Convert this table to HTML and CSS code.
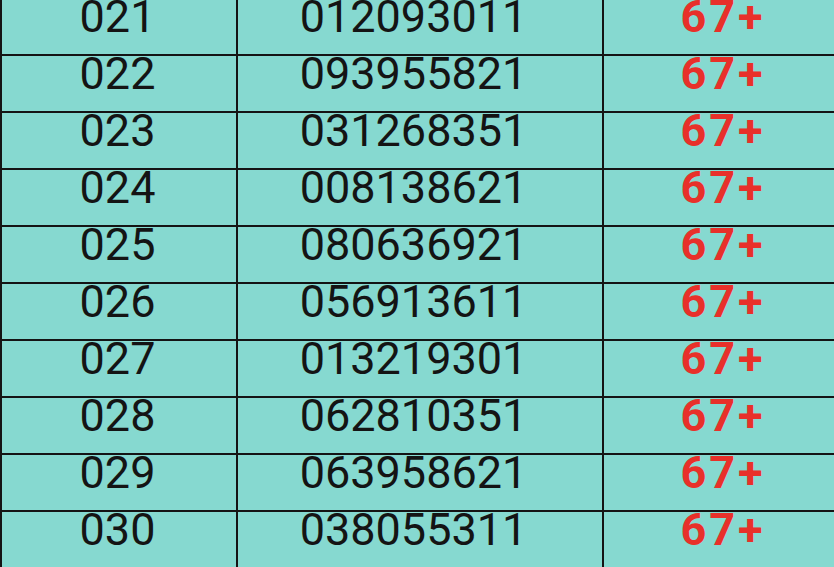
FILE: index.html
```html
<!DOCTYPE html>
<html>
<head>
<meta charset="utf-8">
<link rel="stylesheet" href="styles.css">
</head>
<body>
<div class="table">
  <div class="row"><div class="cell c1">021</div><div class="cell c2">012093011</div><div class="cell c3">67+</div></div>
  <div class="row"><div class="cell c1">022</div><div class="cell c2">093955821</div><div class="cell c3">67+</div></div>
  <div class="row"><div class="cell c1">023</div><div class="cell c2">031268351</div><div class="cell c3">67+</div></div>
  <div class="row"><div class="cell c1">024</div><div class="cell c2">008138621</div><div class="cell c3">67+</div></div>
  <div class="row"><div class="cell c1">025</div><div class="cell c2">080636921</div><div class="cell c3">67+</div></div>
  <div class="row"><div class="cell c1">026</div><div class="cell c2">056913611</div><div class="cell c3">67+</div></div>
  <div class="row"><div class="cell c1">027</div><div class="cell c2">013219301</div><div class="cell c3">67+</div></div>
  <div class="row"><div class="cell c1">028</div><div class="cell c2">062810351</div><div class="cell c3">67+</div></div>
  <div class="row"><div class="cell c1">029</div><div class="cell c2">063958621</div><div class="cell c3">67+</div></div>
  <div class="row"><div class="cell c1">030</div><div class="cell c2">038055311</div><div class="cell c3">67+</div></div>
</div>
</body>
</html>
```
FILE: styles.css
```css
html, body {
  margin: 0;
  padding: 0;
  height: 100%;
  overflow: hidden;
  background: #86d9d0;
}
.table {
  margin-top: -1.4px;
  border-left: 2px solid #141414;
  display: flex;
  flex-direction: column;
}
.row {
  display: grid;
  grid-template-columns: 236px 366px 1fr;
  height: 57.06px;
  box-sizing: border-box;
  border-bottom: 2px solid #141414;
}
.cell {
  box-sizing: border-box;
  text-align: center;
  font-family: Roboto, "Liberation Sans", sans-serif;
  font-size: 45px;
  line-height: 36px;
  color: #141414;
  white-space: nowrap;
}
.c1, .c2 {
  border-right: 2px solid #141414;
}
.c1 {
  padding-right: 3px;
}
.c2 {
  padding-right: 13px;
}
.c3 {
  font-weight: bold;
  letter-spacing: 3px;
  color: #e8302a;
  padding-left: 8px;
}
```
